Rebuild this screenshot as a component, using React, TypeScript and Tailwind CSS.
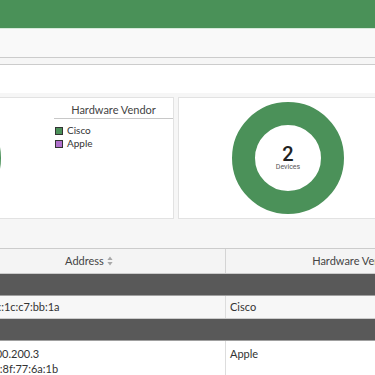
import React from "react";

const SortIcon = () => (
  <svg width="6" height="10" viewBox="0 0 6 10" className="ml-[3px]">
    <path d="M3 0.5 L5.6 4 L0.4 4 Z" fill="#a8a8a8" />
    <path d="M3 9.5 L5.6 6 L0.4 6 Z" fill="#a8a8a8" />
  </svg>
);

const Donut = ({ children, split }: { children?: React.ReactNode; split?: boolean }) => (
  <div className="relative w-[112px] h-[112px]">
    <svg width="112" height="112" viewBox="0 0 112 112">
      <circle cx="56" cy="56" r="44.5" fill="none" stroke="#4b9159" strokeWidth="23" />
      {split && (
        <path d="M56 11.5 A44.5 44.5 0 0 0 56 100.5" fill="none" stroke="#b070cc" strokeWidth="23" />
      )}
    </svg>
    <div className="absolute inset-0 flex flex-col items-center justify-center">{children}</div>
  </div>
);

const ChartCard = ({ title, items, split, center }: { title?: string; items?: { label: string; color: string }[]; split?: boolean; center?: React.ReactNode }) => (
  <div className="w-[339px] h-[122px] shrink-0 bg-white border border-[#e2e2e2] flex">
    <div className="w-[218px] flex items-center justify-center">
      <Donut split={split}>{center}</Donut>
    </div>
    <div className="w-[119px]">
      {title && (
        <div className="mt-[4px] h-[17px] border-b border-[#c8c8c8] text-center text-[11px] leading-[16px] text-[#444]">{title}</div>
      )}
      <div className="mt-[5px] pl-[1px]">
        {items?.map((it) => (
          <div key={it.label} className="flex items-center gap-[4px] h-[13px] text-[10px] text-[#333]">
            <span className="w-[8px] h-[8px] border border-[#333]" style={{ backgroundColor: it.color }} />
            {it.label}
          </div>
        ))}
      </div>
    </div>
  </div>
);

export default function App() {
  return (
    <div className="w-[375px] h-[375px] overflow-hidden bg-white font-['Lato','Open_Sans',sans-serif] text-[#333]">
      <div className="h-[28px] bg-[#4a9158]" />
      <div className="h-[1px] bg-[#d6e8da]" />
      <div className="h-[29px] bg-[#f9f9f9] border-b border-[#cccccc]" />
      <div className="h-[7px] bg-[#f6f6f6] border-b border-[#cccccc]" />
      <div className="h-[28px] bg-white" />

      <div className="h-[155px] bg-[#f6f6f6] pt-[4px]">
        <div className="flex gap-[4px] ml-[-165px]">
          <ChartCard
            title="Hardware Vendor"
            split
            items={[
              { label: "Cisco", color: "#4b9159" },
              { label: "Apple", color: "#b070cc" },
            ]}
          />
          <ChartCard
            center={
              <>
                <span className="font-['Roboto',sans-serif] font-medium text-[20px] leading-[16px] text-[#222]">2</span>
                <span className="mt-[1px] font-['Roboto',sans-serif] text-[7px] leading-[8px] text-[#555]">Devices</span>
              </>
            }
          />
        </div>
      </div>

      <div className="ml-[-47px] w-[600px] text-[11px]">
        <div className="flex h-[26px] bg-[#f4f4f4] border-y border-[#cccccc] text-[#444]">
          <div className="w-[273px] border-r border-[#d4d4d4] flex items-center justify-center">
            Address
            <SortIcon />
          </div>
          <div className="w-[266px] flex items-center justify-center">
            Hardware Vendor
            <SortIcon />
          </div>
        </div>

        <div className="h-[22px] bg-[#595959] border-b border-[#a0a0a0]" />
        <div className="flex h-[23px] bg-[#f7f7f7] border-b border-[#cccccc]">
          <div className="w-[273px] border-r border-[#dddddd] pl-[21px] flex items-center">00:0c:1c:c7:bb:1a</div>
          <div className="w-[266px] pl-[4px] flex items-center">Cisco</div>
        </div>

        <div className="h-[22px] bg-[#595959] border-b border-[#a0a0a0]" />
        <div className="flex h-[60px] bg-white">
          <div className="w-[273px] border-r border-[#dddddd] pl-[21px] pt-[5px] leading-[15px]">
            <div>10.100.200.3</div>
            <div>f0:18:8f:77:6a:1b</div>
          </div>
          <div className="w-[266px] pl-[4px] pt-[5px] leading-[15px]">Apple</div>
        </div>
      </div>
    </div>
  );
}
